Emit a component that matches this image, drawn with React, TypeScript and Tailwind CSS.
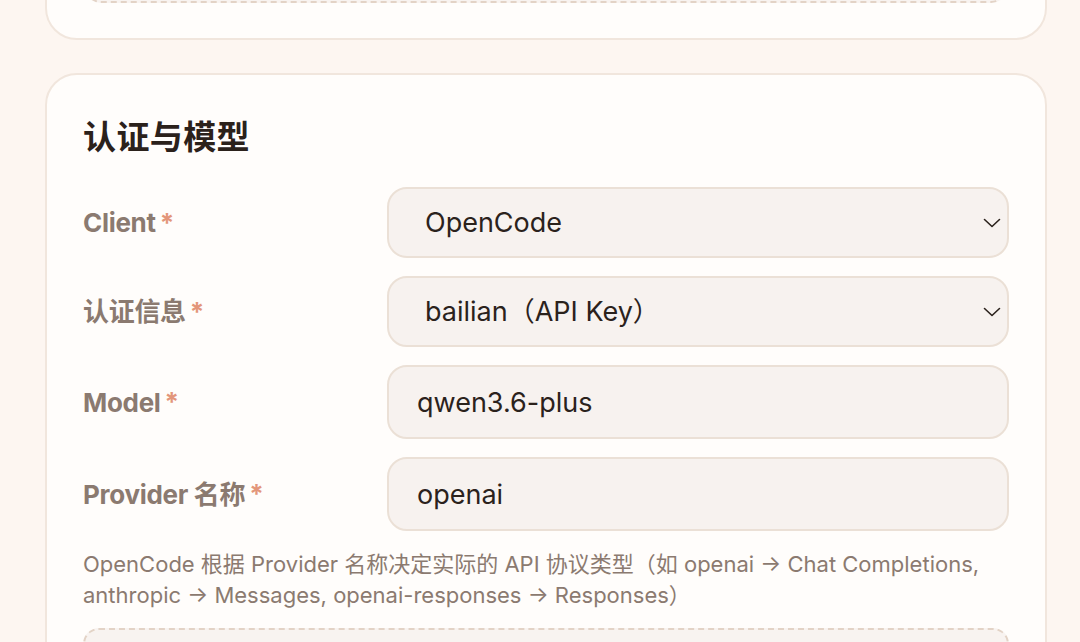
import React from "react";

const FONT = "font-['Inter','Noto_Sans_CJK_SC',sans-serif]";

function Chevron() {
  return (
    <svg className="h-[10px] w-[18px] shrink-0" viewBox="0 0 18 10" fill="none" stroke="#2b221c" strokeWidth="1.6" strokeLinecap="round" strokeLinejoin="round">
      <path d="M1.5 1.5 9 8.5l7.5-7" />
    </svg>
  );
}

function Label({ text }: { text: string }) {
  return (
    <div className="flex items-center gap-[4px] text-[26px] font-bold tracking-[-0.3px] text-[#8b7a70]">
      <span>{text}</span>
      <span className="text-[26px] leading-none text-[#e3967a]">*</span>
    </div>
  );
}

function SelectBox({ value }: { value: string }) {
  return (
    <div className="flex h-[71px] items-center justify-between rounded-[20px] border-2 border-[#ebe0d6] bg-[#f7f2ef] pl-[36px] pr-[6px]">
      <span className="pt-[2px] text-[27px] text-[#2b221c]">{value}</span>
      <Chevron />
    </div>
  );
}

function TextBox({ value }: { value: string }) {
  return (
    <div className="flex h-[74px] items-center rounded-[20px] border-2 border-[#ebe0d6] bg-[#f7f2ef] px-[28px]">
      <span className="pt-[2px] text-[27px] text-[#2b221c]">{value}</span>
    </div>
  );
}

export default function App() {
  return (
    <div className={`h-screen overflow-hidden bg-[#fdf6f1] pl-[45px] pr-[33px] ${FONT}`}>
      {/* previous section, scrolled mostly out of view */}
      <div className="-mt-[119px] rounded-[32px] border-2 border-[#f1e6dd] bg-[#fffdfb] px-[38px] pt-[40px] pb-[35px]">
        <div className="h-[80px] rounded-[16px] border-2 border-dashed border-[#e3d3c6] bg-[#f8f3f0]" />
      </div>

      <div className="mt-[33px] rounded-[32px] border-2 border-[#f1e6dd] bg-[#fffdfb] px-[36px] pt-[42px] pb-[40px]">
        <h2 className="text-[33px] font-bold leading-[40px] tracking-[0.4px] text-[#2b211b]">认证与模型</h2>

        <div className="mt-[30px] grid grid-cols-[304px_1fr] items-center gap-y-[18px]">
          <Label text="Client" />
          <SelectBox value="OpenCode" />
          <Label text="认证信息" />
          <SelectBox value="bailian（API Key）" />
          <Label text="Model" />
          <TextBox value="qwen3.6-plus" />
          <Label text="Provider 名称" />
          <TextBox value="openai" />
        </div>

        <p className="mt-[18px] text-[22px] leading-[31px] text-[#8b7a70]">
          OpenCode 根据 Provider 名称决定实际的 API 协议类型（如 openai → Chat Completions,
          <br />
          anthropic → Messages, openai-responses → Responses）
        </p>

        <div className="mt-[17px] h-[120px] rounded-[16px] border-2 border-dashed border-[#e3d3c6] bg-[#f8f3f0]" />
      </div>
    </div>
  );
}
